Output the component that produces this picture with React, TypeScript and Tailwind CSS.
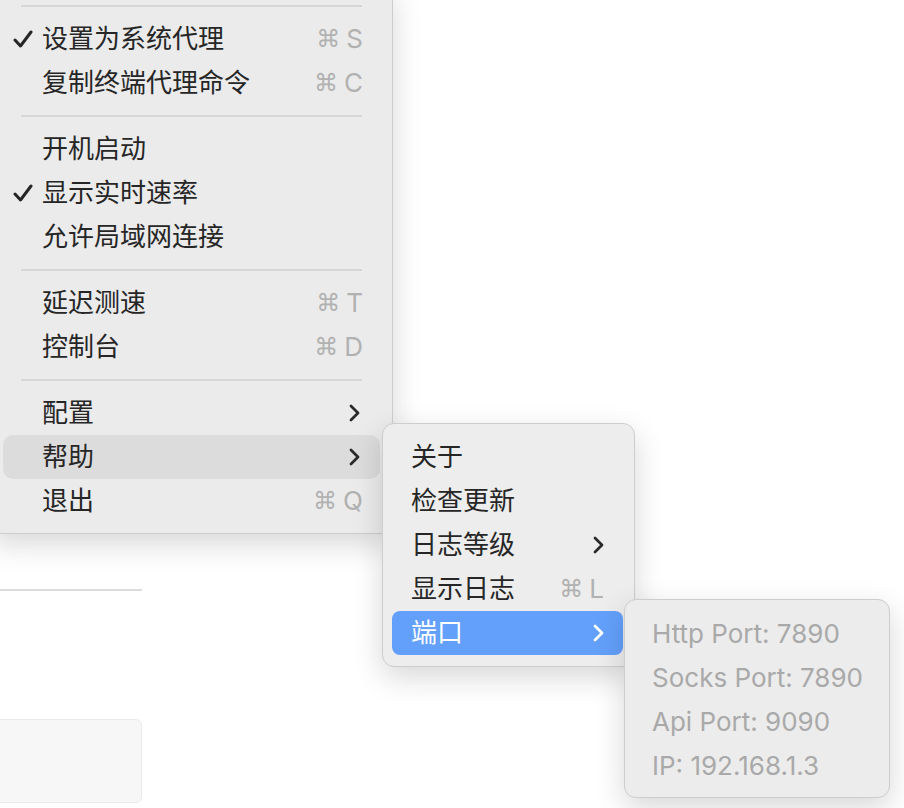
import React from 'react';

type Item =
	| { kind: 'sep' }
	| { kind: 'item'; label: string; checked?: boolean; shortcut?: string; submenu?: boolean; hover?: boolean };

const mainItems: Item[] = [
	{ kind: 'sep' },
	{ kind: 'item', label: '设置为系统代理', checked: true, shortcut: 'S' },
	{ kind: 'item', label: '复制终端代理命令', shortcut: 'C' },
	{ kind: 'sep' },
	{ kind: 'item', label: '开机启动' },
	{ kind: 'item', label: '显示实时速率', checked: true },
	{ kind: 'item', label: '允许局域网连接' },
	{ kind: 'sep' },
	{ kind: 'item', label: '延迟测速', shortcut: 'T' },
	{ kind: 'item', label: '控制台', shortcut: 'D' },
	{ kind: 'sep' },
	{ kind: 'item', label: '配置', submenu: true },
	{ kind: 'item', label: '帮助', submenu: true, hover: true },
	{ kind: 'item', label: '退出', shortcut: 'Q' },
];

const helpItems = [
	{ label: '关于' },
	{ label: '检查更新' },
	{ label: '日志等级', submenu: true },
	{ label: '显示日志', shortcut: 'L' },
	{ label: '端口', submenu: true, active: true },
];

const ports = ['Http Port: 7890', 'Socks Port: 7890', 'Api Port: 9090', 'IP: 192.168.1.3'];

const Check = () => (
	<svg width="20" height="18" viewBox="0 0 20 18" fill="none">
		<path d="M2 10 L7.5 16 L18 2" stroke="#262626" strokeWidth="3" strokeLinecap="round" strokeLinejoin="round" />
	</svg>
);

const Chevron = ({ color }: { color: string }) => (
	<svg width="11" height="18" viewBox="0 0 11 18" fill="none">
		<path d="M2 2 L9 9 L2 16" stroke={color} strokeWidth="2.8" strokeLinecap="round" strokeLinejoin="round" />
	</svg>
);

const Shortcut = ({ k }: { k: string }) => (
	<span className="flex items-center gap-[6px] text-[#b1b1b1]">
		<span className="font-['DejaVu_Sans',sans-serif] text-[24px] leading-none">⌘</span>
		<span className="font-['Inter',sans-serif] text-[26px] leading-none">{k}</span>
	</span>
);

const App: React.FC = () => {
	return (
		<div className="relative h-[808px] w-[904px] overflow-hidden bg-white font-['Inter','Noto_Sans_CJK_SC',sans-serif] text-[26px] text-[#262626]">
			{/* page behind the menus */}
			<div className="flex w-[142px] flex-col">
				<div className="mt-[589px] h-[2px] bg-[#dcdcdc]" />
				<div className="ml-[-8px] mt-[128px] h-[84px] rounded-[6px] border border-[#ebebeb] bg-[#f7f7f7]" />
			</div>

			{/* main menu */}
			<div className="absolute left-[-10px] top-[-16px] w-[403px] rounded-[12px] border border-[#cdcdcd] bg-[#ebebeb] px-[12px] pb-[10px] pt-[10px] shadow-[0_10px_30px_rgba(0,0,0,0.16)]">
				{mainItems.map((it, i) =>
					it.kind === 'sep' ? (
						<div key={i} className="flex h-[22px] items-center px-[18px]">
							<div className="h-[2px] w-full bg-[#d6d6d6]" />
						</div>
					) : (
						<div
							key={i}
							className={`flex h-[44px] items-center rounded-[10px] pl-[10px] ${it.hover ? 'bg-[#dcdcdc]' : ''} ${it.submenu ? 'pr-[20px]' : 'pr-[17px]'}`}
						>
							<span className="flex w-[29px] items-center">{it.checked && <Check />}</span>
							<span className="flex-1 leading-none">{it.label}</span>
							{it.shortcut && <Shortcut k={it.shortcut} />}
							{it.submenu && <Chevron color="#2a2a2a" />}
						</div>
					)
				)}
			</div>

			{/* help submenu */}
			<div className="absolute left-[382px] top-[423px] w-[253px] rounded-[12px] border border-[#cdcdcd] bg-[#ededed] pb-[11px] pl-[9px] pr-[11px] pt-[11px] shadow-[0_10px_30px_rgba(0,0,0,0.16)]">
				{helpItems.map((it) => (
					<div
						key={it.label}
						className={`flex h-[44px] items-center rounded-[8px] pl-[19px] pr-[19px] ${it.active ? 'bg-[#63a0fb] text-white' : ''}`}
					>
						<span className="flex-1 leading-none">{it.label}</span>
						{it.shortcut && <Shortcut k={it.shortcut} />}
						{it.submenu && <Chevron color={it.active ? '#ffffff' : '#2a2a2a'} />}
					</div>
				))}
			</div>

			{/* port submenu */}
			<div className="absolute left-[624px] top-[599px] w-[266px] rounded-[12px] border border-[#cdcdcd] bg-[#ececec] pb-[9px] pl-[10px] pr-[10px] pt-[12px] shadow-[0_10px_30px_rgba(0,0,0,0.16)]">
				{ports.map((p) => (
					<div key={p} className="flex h-[44px] items-center pl-[17px] font-['Inter',sans-serif] text-[26px] leading-none text-[#a9a9a9]">
						{p}
					</div>
				))}
			</div>
		</div>
	);
};

export default App;
